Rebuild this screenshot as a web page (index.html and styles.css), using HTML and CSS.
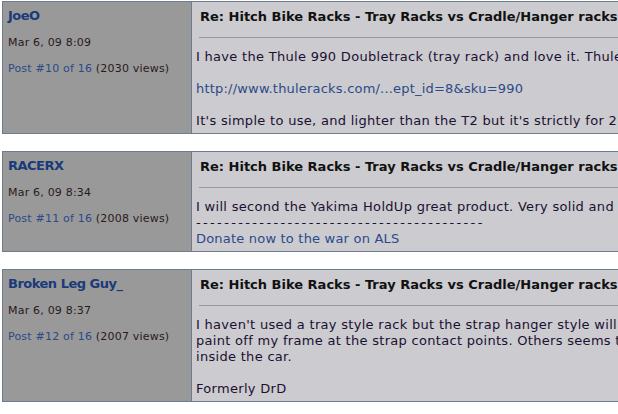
FILE: index.html
```html
<!DOCTYPE html>
<html lang="en">
<head>
    <meta charset="UTF-8">
    <title>Re: Hitch Bike Racks - Tray Racks vs Cradle/Hanger racks</title>
    <link rel="stylesheet" href="styles.css">
</head>
<body>
    <div class="thread">
        <div class="post">
            <div class="author">
                <a class="name" href="#">JoeO</a>
                <div class="date">Mar 6, 09 8:09</div>
                <div class="meta"><a href="#">Post #10 of 16</a> (2030 views)</div>
            </div>
            <div class="content">
                <div class="subject">Re: Hitch Bike Racks - Tray Racks vs Cradle/Hanger racks</div>
                <div class="rule"></div>
                <div class="body">
                    I have the Thule 990 Doubletrack (tray rack) and love it. Thule makes a good product.<br><br>
                    <a href="#">http://www.thuleracks.com/...ept_id=8&amp;sku=990</a><br><br>
                    It's simple to use, and lighter than the T2 but it's strictly for 2 bikes.
                </div>
            </div>
        </div>

        <div class="post">
            <div class="author">
                <a class="name" href="#">RACERX</a>
                <div class="date">Mar 6, 09 8:34</div>
                <div class="meta"><a href="#">Post #11 of 16</a> (2008 views)</div>
            </div>
            <div class="content">
                <div class="subject">Re: Hitch Bike Racks - Tray Racks vs Cradle/Hanger racks</div>
                <div class="rule"></div>
                <div class="body">
                    I will second the Yakima HoldUp great product. Very solid and I like it a lot.<br>
                    <span class="sig-line">-----------------------------------------</span><br>
                    <a href="#">Donate now to the war on ALS</a>
                </div>
            </div>
        </div>

        <div class="post">
            <div class="author">
                <a class="name" href="#">Broken Leg Guy_</a>
                <div class="date">Mar 6, 09 8:37</div>
                <div class="meta"><a href="#">Post #12 of 16</a> (2007 views)</div>
            </div>
            <div class="content">
                <div class="subject">Re: Hitch Bike Racks - Tray Racks vs Cradle/Hanger racks</div>
                <div class="rule"></div>
                <div class="body">
                    I haven't used a tray style rack but the strap hanger style will take the<br>
                    paint off my frame at the strap contact points. Others seems to prefer<br>
                    inside the car.<br><br>
                    Formerly DrD
                </div>
            </div>
        </div>
    </div>
</body>
</html>
```

FILE: styles.css
```css
/* Page */
body {
    margin: 1px 0 0 2px;
    background: #fff;
    font-family: "DejaVu Sans", Verdana, sans-serif;
    color: #1c1030;
    overflow: hidden;
}

a {
    color: #2b4a88;
    text-decoration: none;
}

/* One post = author column + message column */
.post {
    display: flex;
    width: 900px;
    border: 1px solid #6d7d8e;
    margin-bottom: 17px;
}

.author {
    width: 183px;
    flex-shrink: 0;
    padding: 6px 0 0 5px;
    background: #999999;
    border-right: 1px solid #6d7d8e;
}

.author .name {
    display: block;
    font-size: 13px;
    line-height: 16px;
    font-weight: bold;
    letter-spacing: -0.5px;
    color: #1a3a7a;
}

.date,
.meta {
    font-size: 11px;
    line-height: 14px;
    letter-spacing: 0.2px;
    margin-top: 12px;
    color: #2a1a1a;
}

.content {
    flex: 1;
    padding: 0 4px 4px;
    background: #cbcbd0;
}

.subject {
    padding: 7px 4px 0;
    font-size: 13px;
    line-height: 16px;
    font-weight: bold;
    color: #111;
}

.rule {
    height: 1px;
    margin: 12px 0 11px 3px;
    background: #999aa0;
}

.body {
    font-size: 13px;
    line-height: 16px;
    letter-spacing: 0.3px;
    white-space: nowrap;
}

.body a {
    letter-spacing: 0.2px;
}

.sig-line {
    letter-spacing: 2.35px;
}
```
